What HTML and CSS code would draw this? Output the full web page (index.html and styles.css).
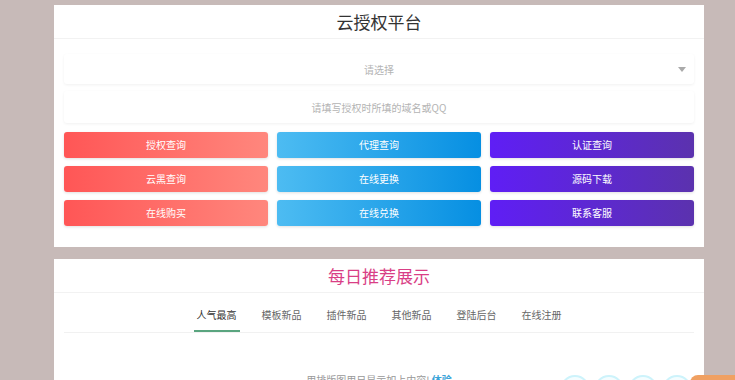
FILE: index.html
```html
<!DOCTYPE html>
<html lang="zh">
<head>
<meta charset="utf-8">
<link rel="stylesheet" href="styles.css">
</head>
<body>
<div class="page">
  <section class="card card-auth">
    <h1 class="title">云授权平台</h1>
    <div class="form">
      <div class="field select">
        <span class="ph">请选择</span>
        <span class="caret"></span>
      </div>
      <div class="field input">
        <span class="ph">请填写授权时所填的域名或QQ</span>
      </div>
      <div class="btn-grid">
        <a class="btn red">授权查询</a>
        <a class="btn blue">代理查询</a>
        <a class="btn purple">认证查询</a>
        <a class="btn red">云黑查询</a>
        <a class="btn blue">在线更换</a>
        <a class="btn purple">源码下载</a>
        <a class="btn red">在线购买</a>
        <a class="btn blue">在线兑换</a>
        <a class="btn purple">联系客服</a>
      </div>
    </div>
  </section>
  <section class="card card-daily">
    <h2 class="title pink">每日推荐展示</h2>
    <nav class="tabs">
      <span class="tab active">人气最高</span>
      <span class="tab">模板新品</span>
      <span class="tab">插件新品</span>
      <span class="tab">其他新品</span>
      <span class="tab">登陆后台</span>
      <span class="tab">在线注册</span>
    </nav>
    <p class="note">用排版图用日显示如上内容! <b>体验</b></p>
  </section>
</div>
<div class="float-bubbles">
  <span></span><span></span><span></span><span></span>
</div>
<div class="float-orange"></div>
</body>
</html>
```
FILE: styles.css
```css
html, body {
  margin: 0;
  padding: 0;
  background: #c7bab8;
  font-family: "Noto Sans CJK SC", "Noto Sans", sans-serif;
  overflow: hidden;
}
.page {
  width: 650px;
  margin-left: 54px;
  padding-top: 5px;
  display: flex;
  flex-direction: column;
  gap: 12px;
}
.card {
  background: #fff;
}
.title {
  margin: 0;
  height: 33px;
  line-height: 33px;
  text-align: center;
  font-size: 17px;
  font-weight: 400;
  color: #333;
  border-bottom: 1px solid #f2f2f2;
}
.title.pink {
  color: #d93f86;
}
.form {
  padding: 15px 10px 21px 10px;
  display: flex;
  flex-direction: column;
}
.field {
  height: 30px;
  position: relative;
  display: flex;
  align-items: center;
  justify-content: center;
  box-shadow: 0 1px 3px rgba(0,0,0,0.06);
  border-radius: 3px;
  background: #fff;
}
.field.input {
  margin-top: 7px;
  height: 32px;
}
.ph {
  font-size: 10px;
  color: #b4b4b4;
}
.caret {
  position: absolute;
  right: 8px;
  top: 13px;
  width: 0;
  height: 0;
  border-left: 4px solid transparent;
  border-right: 4px solid transparent;
  border-top: 5px solid #aaa;
}
.btn-grid {
  margin-top: 9px;
  display: grid;
  grid-template-columns: repeat(3, 1fr);
  column-gap: 9px;
  row-gap: 8px;
}
.btn {
  height: 26px;
  line-height: 26px;
  border-radius: 3px;
  text-align: center;
  color: #fff;
  font-size: 10px;
  box-shadow: 0 1px 3px rgba(0,0,0,0.12);
}
.btn.red {
  background: linear-gradient(to right, #ff5656, #ff877d);
}
.btn.blue {
  background: linear-gradient(to right, #4dbcf2, #068fe2);
}
.btn.purple {
  background: linear-gradient(to right, #5f1ef5, #5b32ae);
}
.card-daily {
  height: 140px;
}
.tabs {
  display: flex;
  justify-content: center;
  gap: 19px;
  margin: 0 10px;
  padding-top: 14px;
  border-bottom: 1px solid #f1f1f1;
}
.tab {
  font-size: 10px;
  color: #666;
  padding: 0 3px 8px 3px;
  border-bottom: 2px solid transparent;
}
.tab.active {
  color: #333;
  border-bottom-color: #5aa57f;
}
.note {
  margin: 39px 0 0 0;
  text-align: center;
  font-size: 10px;
  color: #999;
}
.note b {
  color: #3aa3d8;
  font-weight: 700;
}
.float-bubbles {
  position: absolute;
  left: 560px;
  top: 375px;
  display: flex;
  gap: 4px;
}
.float-bubbles span {
  width: 26px;
  height: 26px;
  border-radius: 50%;
  border: 2px solid #cdf3fb;
  background: #f4fdff;
}
.float-orange {
  position: absolute;
  left: 690px;
  top: 375px;
  width: 60px;
  height: 30px;
  border-radius: 8px 0 0 0;
  background: #f0a062;
}
```
